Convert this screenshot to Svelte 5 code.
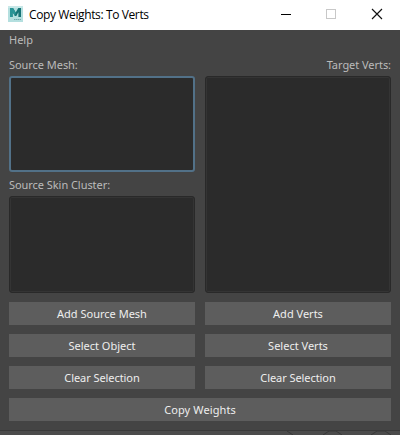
<script>
  const rows = [
    [['Add Source Mesh', 'asm'], ['Add Verts', 'av']],
    [['Select Object', 'so'], ['Select Verts', 'sv']],
    [['Clear Selection', 'cs'], ['Clear Selection', 'cs']]
  ];
</script>

<div class="window">
  <header>
    <svg class="logo" width="15" height="16" viewBox="0 0 15 16">
      <rect width="15" height="16" fill="#b4dfdf" />
      <path d="M0 0h15v2H0z" fill="#c8e8e8" />
      <path d="M2 11V2h3l2.7 4.6L10.3 2H13v9h-2.6V6.2L8.3 10H7L4.6 6.2V11z" fill="#167476" />
      <path d="M2 2h3l2.7 4.6-.7 3.400-2.4-3.8V11H2z" fill="#289496" />
      <path d="M6 13.5h7" stroke="#70aaad" stroke-dasharray="1.5 .5" />
    </svg>
    <h1>Copy Weights: To Verts</h1>
    <div class="controls">
      <svg width="112" height="30" viewBox="0 0 112 30" fill="none">
        <path d="M1 14.5h10" stroke="#000" />
        <rect x="46.5" y="9.5" width="9" height="9" stroke="#c8c8c8" />
        <path d="M92 9l10 10M102 9l-10 10" stroke="#111" stroke-width="1.15" />
      </svg>
    </div>
  </header>
  <nav><span>Help</span></nav>
  <main>
    <div class="panels">
      <section>
        <div class="label">Source Mesh:</div>
        <div class="list focused"></div>
        <div class="label second">Source Skin Cluster:</div>
        <div class="list lower"></div>
      </section>
      <section>
        <div class="label right">Target Verts:</div>
        <div class="list tall"></div>
      </section>
    </div>
    {#each rows as row}
      <div class="row">
        {#each row as [text, name]}
          <button class={name}>{text}</button>
        {/each}
      </div>
    {/each}
    <div class="row"><button class="cw">Copy Weights</button></div>
  </main>
  <footer>
    <svg width="400" height="4" viewBox="0 0 400 4" fill="none">
      <path d="M287 0l6 4M323 4l6-4h7l6 4M371 4l6-4h8l6 4" stroke="#383838" />
    </svg>
  </footer>
</div>

<style>
  :global(body) { margin: 0; overflow: hidden; }
  .window { width: 400px; height: 435px; display: flex; flex-direction: column; background: #444; font: 11px/16px "Noto Sans", sans-serif; color: #bbb; }
  header { height: 30px; flex: none; display: flex; align-items: center; background: #fff; box-sizing: border-box; padding-left: 8px; }
  .logo { margin-top: -2px; }
  h1 { margin: 0 0 0 6px; font: 12px/16px "Open Sans", sans-serif; color: #000; letter-spacing: -.38px; white-space: nowrap; }
  .controls { margin-left: auto; margin-right: 8px; width: 112px; height: 30px; }
  svg { display: block; }
  nav { height: 22px; flex: none; padding: 2px 9px 0; box-sizing: border-box; }
  main { height: 378px; flex: none; padding: 5px 9px 0; box-sizing: border-box; }
  .panels, .row { display: flex; gap: 10px; }
  section { flex: 1; }
  .label { height: 19px; letter-spacing: -.05px; white-space: nowrap; }
  .second { margin-top: 5px; }
  .right { text-align: right; }
  .list { box-sizing: border-box; height: 96px; background: #2b2b2b; border: 1px solid #292929; border-radius: 3px; box-shadow: inset 0 0 0 1px #343434; }
  .focused { border: 2px solid #527188; box-shadow: none; }
  .lower { height: 97px; }
  .tall { height: 217px; }
  .row { margin-top: 9px; }
  button { flex: 1; height: 23px; padding: 0; border: 0; background: #5d5d5d; color: #eee; font: inherit; line-height: 23px; letter-spacing: 0; }
  .cs { letter-spacing: -.07px; }
  .cw { letter-spacing: .1px; }
  footer { height: 5px; background: #4b4b4b; border-top: 1px solid #393939; box-sizing: border-box; overflow: hidden; }
</style>
